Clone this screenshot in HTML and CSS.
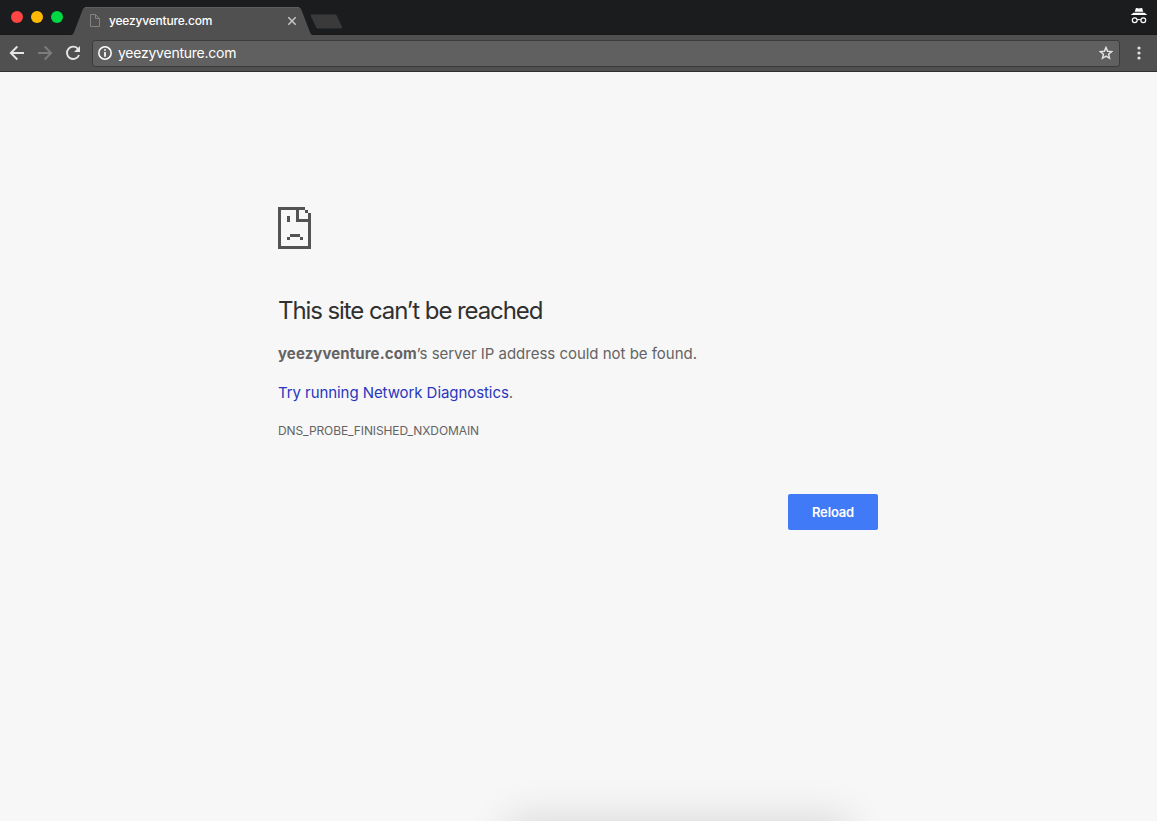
FILE: index.html
```html
<!DOCTYPE html>
<html lang="en">
<head>
<meta charset="utf-8">
<title>yeezyventure.com</title>
<link rel="stylesheet" href="styles.css">
</head>
<body>
<div class="window">
  <header class="tabstrip">
    <div class="lights"><span class="light close"></span><span class="light minimize"></span><span class="light zoom"></span></div>
    <div class="tab">
      <svg class="tab-shape" width="242" height="28" viewBox="0 0 242 28"><path d="M0 28C2 28 2.500 26 3.500 24L11.500 3Q12.500 0 15.500 0H226.500Q229.500 0 230.500 3L238.500 24Q239.500 28 242 28Z" fill="#505050"/><path d="M14 .5H228" stroke="#5e5e5e" fill="none"/></svg>
      <svg class="favicon" width="12" height="15" viewBox="0 0 12 15"><path d="M1.500 1.500H6.500L10.500 5.500V13.500H1.500ZM6.500 1.500V5.500H10.500" fill="none" stroke="#838383"/></svg>
      <span class="tab-title">yeezyventure.com</span>
      <svg class="tab-close" width="10" height="10" viewBox="0 0 10 10"><path d="M1.300 1.300L8.700 8.700M8.700 1.300L1.300 8.700" stroke="#c7c7c7" stroke-width="1.500"/></svg>
    </div>
    <svg class="newtab" width="33" height="15" viewBox="0 0 33 15"><path d="M1.500 .5H25Q26.500 .5 27 2L32 13Q32.500 14.500 31 14.500H8Q6.500 14.500 6 13L.8 2Q.2 .5 1.500 .5Z" fill="#3a3a3a"/></svg>
    <svg class="incognito" width="18" height="18" viewBox="0 0 18 18"><path d="M5.800 1.300Q6 .7 6.700 1L9 1.600L11.300 1Q12 .7 12.200 1.300L13.200 4.800H4.800ZM3.500 5.800H14.500L17.300 8H.7Z" fill="#fff"/><g fill="none" stroke="#fff" stroke-width="1.200"><circle cx="4.700" cy="13.300" r="2.400"/><circle cx="13.300" cy="13.300" r="2.400"/><path d="M7.100 13Q9 12 10.900 13"/></g></svg>
  </header>
  <nav class="toolbar">
    <svg class="back" width="16" height="16" viewBox="0 0 16 16"><path d="M15 8H2M8.300 1.500L1.800 8L8.300 14.500" fill="none" stroke="#e6e6e6" stroke-width="1.900"/></svg>
    <svg class="forward" width="16" height="16" viewBox="0 0 16 16"><path d="M1 8H14M7.700 1.500L14.200 8L7.700 14.500" fill="none" stroke="#7c7c7c" stroke-width="1.900"/></svg>
    <svg class="refresh" width="16" height="16" viewBox="0 0 16 16"><path d="M13.200 4.200A6.200 6.200 0 1 0 14 10" fill="none" stroke="#e6e6e6" stroke-width="1.900"/><path d="M15 1V7H9Z" fill="#e6e6e6"/></svg>
    <div class="omnibox">
      <svg class="info" width="14" height="14" viewBox="0 0 14 14"><circle cx="7" cy="7" r="6.200" fill="none" stroke="#fff" stroke-width="1.500"/><path d="M7 3.200V4.800M7 6V10.700" stroke="#fff" stroke-width="1.700"/></svg>
      <span class="url">yeezyventure.com</span>
      <svg class="star" width="14" height="14" viewBox="0 0 14 14"><path d="M7 1.500L8.600 5.200L12.700 5.600L9.600 8.300L10.500 12.300L7 10.200L3.500 12.300L4.400 8.300L1.300 5.600L5.400 5.200Z" fill="none" stroke="#e2e2e2" stroke-width="1.500"/></svg>
    </div>
    <svg class="menu" width="4" height="14" viewBox="0 0 4 14"><g fill="#e2e2e2"><circle cx="2" cy="2" r="1.600"/><circle cx="2" cy="7" r="1.600"/><circle cx="2" cy="12" r="1.600"/></g></svg>
  </nav>
  <main class="page">
    <div class="error">
      <svg class="sad" width="33" height="42" viewBox="0 0 33 42" shape-rendering="crispEdges"><path d="M0 0H27V3H30V6H33V42H0ZM3 3V39H30V15H18V3ZM21 3V12H30V6H27V3ZM9 9H12V15H9ZM12 27H22V30H12ZM9 30H12V33H9ZM22 30H25V33H22Z" fill="#535353" fill-rule="evenodd"/></svg>
      <h1 class="heading">This site can’t be reached</h1>
      <p class="summary"><strong class="host">yeezyventure.com</strong>’s server IP address could not be found.</p>
      <p class="suggest"><a class="link">Try running Network Diagnostics</a>.</p>
      <p class="code">DNS_PROBE_FINISHED_NXDOMAIN</p>
      <button class="reload">Reload</button>
    </div>
    <div class="shade"></div>
  </main>
</div>
</body>
</html>
```
FILE: styles.css
```css
* { box-sizing: border-box; }
body { margin: 0; font-family: Inter, "Liberation Sans", sans-serif; }
svg { display: block; flex: none; }
.window { display: flex; flex-direction: column; height: 821px; overflow: hidden; background: #f7f7f7; }
.tabstrip { display: flex; height: 35px; background: #1b1c1e; border-bottom: 1px solid #191919; }
.lights { display: flex; gap: 8px; padding: 11px 0 0 11px; width: 71px; }
.light { width: 12px; height: 12px; border-radius: 50%; }
.close { background: #ff4543; }
.minimize { background: #ffb902; }
.zoom { background: #00d742; }
.tab { position: relative; display: flex; width: 242px; height: 28px; margin-top: 7px; padding-left: 18px; }
.tab-shape { position: absolute; left: 0; top: 0; }
.favicon { position: relative; margin-top: 6px; }
.tab-title { position: relative; width: 174px; margin-left: 8px; font-size: 12px; line-height: 27px; font-weight: 500; letter-spacing: -.2px; color: #fff; white-space: nowrap; }
.tab-close { position: relative; margin: 9px 0 0 4px; }
.newtab { margin: 14px 0 0 -3px; }
.incognito { margin: 7px 9px 0 auto; }
.toolbar { display: flex; align-items: center; height: 37px; padding: 0 16px 0 9px; background: #505050; border-bottom: 1px solid #303030; }
.forward { margin-left: 12px; }
.refresh { margin-left: 12px; }
.omnibox { display: flex; align-items: center; width: 1028px; height: 27px; margin-left: 11px; padding: 0 6px 0 5px; background: #606060; border: 1px solid #3b3b3b; border-radius: 3px; }
.url { margin-left: 6px; padding-bottom: 2px; font-size: 14px; letter-spacing: -.24px; color: #fff; }
.star { margin-left: auto; }
.menu { margin-left: 17px; }
.page { position: relative; flex: 1; overflow: hidden; }
.error { display: flex; flex-direction: column; width: 600px; margin: 135px 0 0 278px; color: #646464; }
.heading { margin: 47px 0 0; font-size: 24px; line-height: 30px; font-weight: 400; letter-spacing: -1.08px; color: #303030; white-space: nowrap; }
.summary { margin: 16px 0 0; font-size: 15px; line-height: 24px; letter-spacing: -.02px; white-space: nowrap; }
.host { letter-spacing: .1px; }
.suggest { margin: 15px 0 0; font-size: 15px; line-height: 24px; letter-spacing: -.07px; }
.link { color: #2936bd; }
.code { margin: 16px 0 0; font-size: 12px; line-height: 20px; letter-spacing: -.1px; }
.reload { align-self: flex-end; width: 90px; height: 36px; margin-top: 53px; padding: 0; border: 0; border-radius: 2px; background: #417af7; color: #fff; font: 600 13px Inter, sans-serif; letter-spacing: -.15px; }
.shade { position: absolute; left: 511px; bottom: -40px; width: 335px; height: 40px; box-shadow: 0 0 40px 4px rgba(0, 0, 0, .12); }
```
